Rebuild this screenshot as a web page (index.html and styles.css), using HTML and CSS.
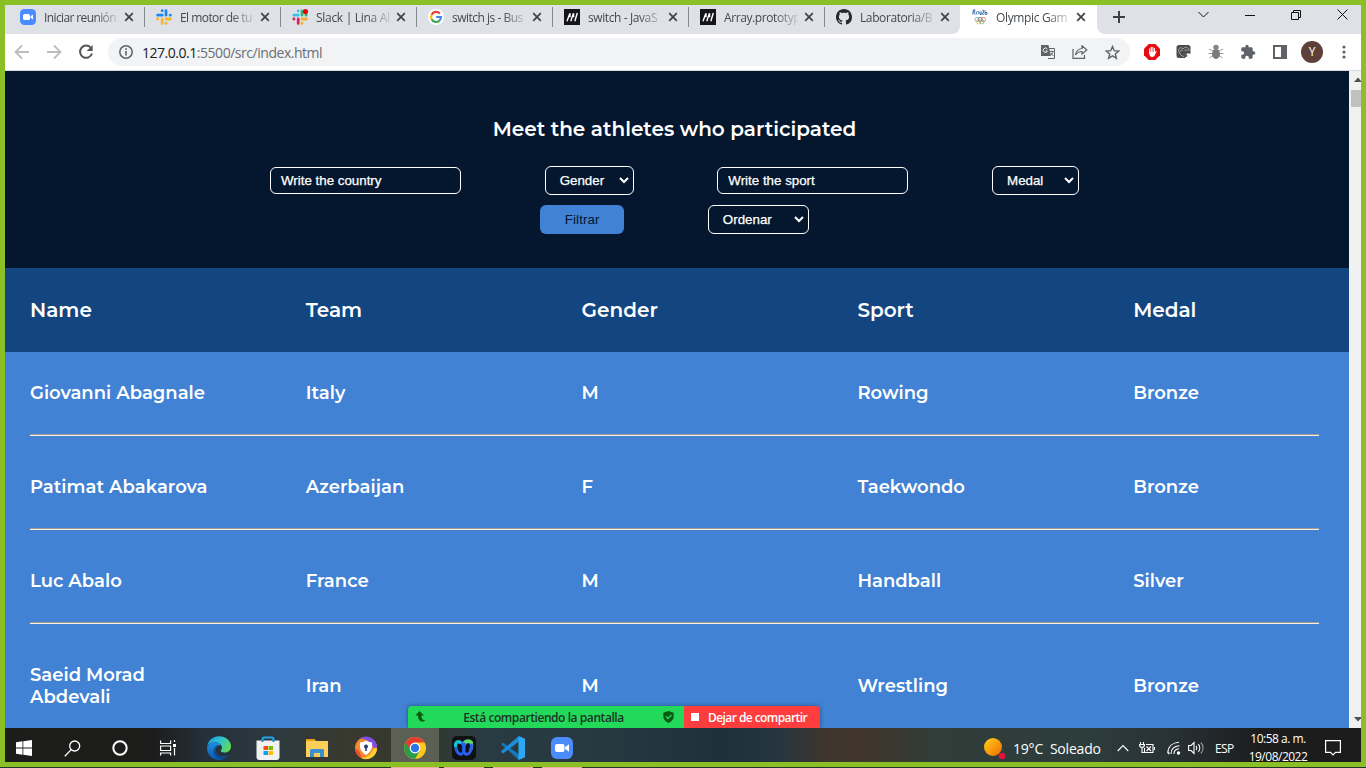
FILE: index.html
```html
<!DOCTYPE html>
<html lang="es">
<head>
<meta charset="utf-8">
<title>Olympic Games</title>
<link rel="stylesheet" href="styles.css">
</head>
<body>
<div class="screen">
  <div class="tabs">
    <div class="strip strip-left">
      <div class="tab"><svg class="fav" viewBox="0 0 16 16"><rect width="16" height="16" rx="4.500" fill="#4a8cff"/><rect x="3" y="5" width="7" height="6" rx="1.500" fill="#fff"/><path d="M10.500 7.300 13 5.500v5l-2.500-1.800z" fill="#fff"/></svg><span class="title t1">Iniciar reunión</span><svg class="x" viewBox="0 0 10 10"><path d="M1.200 1.200l7.600 7.600M8.800 1.200 1.200 8.800"/></svg></div>
      <div class="tab"><svg class="fav" viewBox="0 0 16 16" stroke-linecap="round" stroke-width="2.800" fill="none"><path d="M6.200 1.600v.2M1.600 6.200h4.600M10 1.600v4.600M14.200 6.200h.2" stroke="#1e88f0"/><path d="M1.600 10h.2M6.200 10v4.400M10 14.200v.2M10 10h4.400" stroke="#f5b731"/></svg><span class="title t2">El motor de tu</span><svg class="x" viewBox="0 0 10 10"><path d="M1.200 1.200l7.600 7.600M8.800 1.200 1.200 8.800"/></svg></div>
      <div class="tab"><svg class="fav" viewBox="0 0 16 16" stroke-linecap="round" stroke-width="2.800" fill="none"><path d="M6.200 1.800v.2M1.800 6.200h4.400" stroke="#36c5f0"/><path d="M10 2v4.200M14 6.200h.2" stroke="#2eb67d"/><path d="M1.800 10h.2M6.200 10v4.400" stroke="#e01e5a"/><path d="M10 14.200v.2M10 10h4.400" stroke="#ecb22e"/><circle cx="13.500" cy="2.600" r="2.600" fill="#f00000"/></svg><span class="title t3">Slack | Lina Al</span><svg class="x" viewBox="0 0 10 10"><path d="M1.200 1.200l7.600 7.600M8.800 1.200 1.200 8.800"/></svg></div>
      <div class="tab"><svg class="fav" viewBox="0 0 16 16"><circle cx="8" cy="8" r="8" fill="#fff"/><g fill="none" stroke-width="2.200"><path d="M11.900 4.600A5 5 0 0 0 3.600 5.700" stroke="#ea4335"/><path d="M3.600 5.700a5 5 0 0 0 0 4.600" stroke="#fbbc05"/><path d="M3.600 10.300a5 5 0 0 0 7.800 1.400" stroke="#34a853"/><path d="M11.400 11.700A5 5 0 0 0 13 8H8.200" stroke="#4285f4"/></g></svg><span class="title t4">switch js - Bus</span><svg class="x" viewBox="0 0 10 10"><path d="M1.200 1.200l7.600 7.600M8.800 1.200 1.200 8.800"/></svg></div>
      <div class="tab"><svg class="fav" viewBox="0 0 16 16"><path fill="#15141a" d="M0 0h16v16H0z"/><path d="M3 12.200 5.800 4.500M6.800 12.200 9.300 4.500M10.800 12.200 13.300 4M6 4.200v4M9.600 4.200v4" fill="none" stroke="#fff" stroke-width="1.400"/></svg><span class="title t5">switch - JavaS</span><svg class="x" viewBox="0 0 10 10"><path d="M1.200 1.200l7.600 7.600M8.800 1.200 1.200 8.800"/></svg></div>
      <div class="tab"><svg class="fav" viewBox="0 0 16 16"><path fill="#15141a" d="M0 0h16v16H0z"/><path d="M3 12.200 5.800 4.500M6.800 12.200 9.300 4.500M10.800 12.200 13.300 4M6 4.200v4M9.600 4.200v4" fill="none" stroke="#fff" stroke-width="1.400"/></svg><span class="title t6">Array.prototyp</span><svg class="x" viewBox="0 0 10 10"><path d="M1.200 1.200l7.600 7.600M8.800 1.200 1.200 8.800"/></svg></div>
      <div class="tab last"><svg class="fav" viewBox="0 0 16 16"><path fill="#24292f" d="M8 0C3.580 0 0 3.580 0 8c0 3.540 2.290 6.530 5.470 7.590.4.070.55-.17.55-.38 0-.19-.01-.82-.01-1.490-2.010.37-2.530-.49-2.690-.94-.09-.23-.48-.94-.82-1.130-.28-.15-.68-.52-.01-.53.63-.01 1.080.58 1.230.82.72 1.210 1.870.87 2.330.66.070-.52.28-.87.51-1.070-1.780-.2-3.640-.89-3.640-3.950 0-.87.31-1.590.82-2.150-.08-.2-.36-1.020.08-2.120 0 0 .67-.21 2.200.82.640-.18 1.320-.27 2-.27s1.360.09 2 .27c1.530-1.040 2.200-.82 2.200-.82.44 1.100.16 1.920.08 2.120.51.56.82 1.270.82 2.150 0 3.070-1.870 3.750-3.650 3.950.29.25.54.73.54 1.480 0 1.070-.01 1.930-.01 2.200 0 .21.15.46.55.38A8.010 8.010 0 0 0 16 8c0-4.420-3.580-8-8-8z"/></svg><span class="title t7">Laboratoria/B</span><svg class="x" viewBox="0 0 10 10"><path d="M1.200 1.200l7.600 7.600M8.800 1.200 1.200 8.800"/></svg></div>
    </div>
    <div class="tab active"><svg class="fav" viewBox="0 0 16 16" fill="none"><path d="M.8 5.500 1.300.8h1.500v1.700H1.500L3 5.500M4.300 2.500v3M5.500 2.500c2-.8 2 2.500.3 2.500M8 2.500v3h1.300v-3M10.300 1.300h1.300v1.700l-1.300 2.200h1.500M13 1.300v4h2V3.500h-1.800" stroke="#2c66a8" stroke-width=".9"/><g stroke-width=".7"><circle cx="5" cy="10.500" r="2.100" stroke="#5a9bd0"/><circle cx="8.200" cy="10.500" r="2.100" stroke="#555"/><circle cx="11.400" cy="10.500" r="2.100" stroke="#e0525a"/><circle cx="6.600" cy="12.800" r="2.100" stroke="#e8b84a"/><circle cx="9.800" cy="12.800" r="2.100" stroke="#56b078"/></g></svg><span class="title t8">Olympic Gam</span><svg class="x" viewBox="0 0 10 10"><path d="M1.200 1.200l7.600 7.600M8.800 1.200 1.200 8.800"/></svg></div>
    <div class="strip strip-right">
      <svg class="newtab" viewBox="0 0 12 12"><path d="M6 0v12M0 6h12" stroke="#3c4043" stroke-width="2"/></svg>
      <div class="winbtns">
        <svg width="11" height="8" viewBox="0 0 11 8"><path d="M.5 1l5 5 5-5"/></svg>
        <svg width="10" height="8" viewBox="0 0 10 8"><path d="M0 4.500h10"/></svg>
        <svg width="10" height="10" viewBox="0 0 10 10"><path d="M.5 2.500h7v7h-7zM2.500 2.500v-2h7v7h-2"/></svg>
        <svg width="11" height="11" viewBox="0 0 11 11"><path d="M.5.5l10 10M10.500.5l-10 10"/></svg>
      </div>
    </div>
  </div>

  <div class="toolbar">
    <div class="nav">
      <svg width="16" height="16" viewBox="0 0 16 16" stroke="#bcbdbf"><path d="M15 8H2M8 1.500 1.500 8 8 14.500"/></svg>
      <svg width="16" height="16" viewBox="0 0 16 16" stroke="#bcbdbf"><path d="M1 8h13M8 1.500 14.500 8 8 14.500"/></svg>
      <svg width="16" height="16" viewBox="0 0 16 16" stroke="#54575b"><path d="M13 4A6.100 6.100 0 1 0 14 9.500" stroke-width="2"/><path d="M14.700 1v6h-6z" fill="#54575b" stroke="none"/></svg>
    </div>
    <div class="omnibox">
      <svg width="14" height="14" viewBox="0 0 14 14"><circle cx="7" cy="7" r="6.200" fill="none" stroke="#5f6368" stroke-width="1.500"/><path d="M7 6v4.500M7 3.300v1.600" stroke="#5f6368" stroke-width="1.600"/></svg>
      <span class="url"><b>127.0.0.1</b>:5500/src/index.html</span>
      <div class="omni-icons">
        <svg width="14" height="14" viewBox="0 0 14 14"><path d="M5 3.500h8.500v10H7" fill="#f1f3f4" stroke="#5f6368"/><path d="M0 0h7.500L10 11H0z" fill="#5f6368"/><path d="M6.300 4A2.200 2.200 0 1 0 6.500 6H4.600" fill="none" stroke="#f1f3f4"/><path d="M9 6.500h3.500M11 5.500v1M12 6.500c-.5 2-1.500 3.200-2.500 4M10 8l2.500 3" fill="none" stroke="#5f6368" stroke-width=".9"/></svg>
        <svg width="16" height="14" viewBox="0 0 16 14" fill="none" stroke="#5f6368" stroke-width="1.200"><path d="M1 4v9.400h11.500V10"/><path d="M10 .8 14.800 5 10 9V6.500C7 6.500 5 7.500 3.500 10 4 6.500 6 4 10 3.500z"/></svg>
        <svg width="15" height="15" viewBox="0 0 15 15" fill="none" stroke="#5f6368" stroke-width="1.400"><path d="M7.500 1.500l1.700 4.200 4.600.3-3.500 2.900 1.100 4.400-3.900-2.400-3.900 2.400 1.100-4.400L1.200 6l4.600-.3z"/></svg>
      </div>
    </div>
    <div class="ext">
      <svg width="16" height="16" viewBox="0 0 16 16"><path d="M4.700 0h6.600L16 4.700v6.600L11.300 16H4.700L0 11.300V4.700z" fill="#e40d12"/><path d="M5.700 9V4.800M7.300 8V3.400M8.900 8V3.400M10.500 8.500V4.500" stroke="#fff" stroke-width="1.100" stroke-linecap="round"/><path d="M5.200 8h5.900l1-1.300.6.600-1.700 3.500C10.500 12.300 9.500 13 8.200 13c-2.200 0-3-2-3-5z" fill="#fff"/></svg>
      <svg width="16" height="16" viewBox="0 0 16 16"><rect x=".5" y="1" width="14" height="13" rx="2.500" fill="#4c4c4c"/><g fill="none" stroke="#a5a5a5"><path d="M3 8C1.500 4 5 2.500 7 5c2-3 6-2 6 2M5 8c-1-2 1-3 2-1M9 7c0-2 2-2 2 0M3 8c1 3 3 4 5 4.500"/></g><rect x="9" y="9.500" width="6.500" height="5" rx="2.300" fill="#fff"/><circle cx="9.800" cy="11.500" r="1.500" fill="#555"/></svg>
      <svg width="16" height="16" viewBox="0 0 16 16"><path d="M1 5l4 2M15 5l-4 2M.5 9.500H15.500M1.500 14 5 11.500M14.500 14 11 11.500" stroke="#9a9a9a"/><ellipse cx="8" cy="10" rx="4" ry="5" fill="#7b7b7b"/><circle cx="8" cy="3.500" r="2.700" fill="#858585"/></svg>
      <svg width="16" height="16" viewBox="0 0 24 24"><path fill="#5f6368" d="M20.500 11H19V7c0-1.100-.9-2-2-2h-4V3.500a2.500 2.500 0 0 0-5 0V5H4c-1.100 0-2 .9-2 2v3.800h1.500c1.500 0 2.700 1.200 2.700 2.700S5 16.200 3.500 16.200H2V20c0 1.100.9 2 2 2h3.800v-1.500c0-1.500 1.200-2.700 2.700-2.700s2.700 1.200 2.700 2.700V22H17c1.100 0 2-.9 2-2v-4h1.500a2.500 2.500 0 0 0 0-5z"/></svg>
      <svg width="16" height="16" viewBox="0 0 16 16"><path fill="#5f6368" d="M1 1h14v14H1zM3 3v10h6V3z" fill-rule="evenodd"/></svg>
      <span class="avatar">Y</span>
      <svg width="4" height="14" viewBox="0 0 4 14" fill="#5f6368"><circle cx="2" cy="2" r="1.600"/><circle cx="2" cy="7" r="1.600"/><circle cx="2" cy="12" r="1.600"/></svg>
    </div>
  </div>

  <div class="viewport">
    <div class="page">
      <section class="filters">
        <h3>Meet the athletes who participated</h3>
        <div class="controls">
          <div class="field">Write the country</div>
          <div class="select gender"><span>Gender</span><svg viewBox="0 0 10 7"><path d="M1 1l4 4 4-4"/></svg></div>
          <div class="field">Write the sport</div>
          <div class="select medal"><span>Medal</span><svg viewBox="0 0 10 7"><path d="M1 1l4 4 4-4"/></svg></div>
          <div class="button">Filtrar</div>
          <div class="select order"><span>Ordenar</span><svg viewBox="0 0 10 7"><path d="M1 1l4 4 4-4"/></svg></div>
        </div>
      </section>
      <div class="row head"><span>Name</span><span>Team</span><span>Gender</span><span>Sport</span><span>Medal</span></div>
      <div class="body">
        <div class="row"><span>Giovanni Abagnale</span><span>Italy</span><span>M</span><span>Rowing</span><span>Bronze</span></div>
        <hr>
        <div class="row"><span>Patimat Abakarova</span><span>Azerbaijan</span><span>F</span><span>Taekwondo</span><span>Bronze</span></div>
        <hr>
        <div class="row"><span>Luc Abalo</span><span>France</span><span>M</span><span>Handball</span><span>Silver</span></div>
        <hr>
        <div class="row"><span>Saeid Morad Abdevali</span><span>Iran</span><span>M</span><span>Wrestling</span><span>Bronze</span></div>
      </div>
    </div>
    <div class="scrollbar">
      <svg width="10" height="19" viewBox="0 0 10 19"><path d="M3 11h8L7 6.500z" fill="#505050"/></svg>
      <i class="thumb"></i>
      <svg class="down" width="10" height="17" viewBox="0 0 10 17"><path d="M3 6h8l-4 4.500z" fill="#505050"/></svg>
    </div>
    <div class="share">
      <div class="sharing">
        <svg width="12" height="12" viewBox="0 0 12 12"><path d="M4.500 0l4.500 4.500H6.500c0 3 .8 4.500 4 5C7.500 12 3 10.500 3 4.500H.3z" fill="#0b5a12"/></svg>
        <span>Está compartiendo la pantalla</span>
        <svg width="11" height="12" viewBox="0 0 11 12"><path d="M5.500 0 10.700 1.800V5c0 3.500-2 5.700-5.200 7C2.300 10.700.3 8.500.3 5V1.800z" fill="#0b5a12"/><path d="M3 5.500l2 2 3.500-3.500" fill="none" stroke="#23d959" stroke-width="1.400"/></svg>
      </div>
      <div class="stop"><i></i><span>Dejar de compartir</span></div>
    </div>
  </div>

  <div class="taskbar">
    <div class="apps">
      <div class="app start"><svg width="16" height="16" viewBox="0 0 16 16" fill="#fff"><path d="M0 2.300 6.500 1.300v6.200H0zM7.300 1.200 16 0v7.500H7.300zM0 8.400h6.500v6.300L0 13.800zM7.300 8.400H16V16l-8.700-1.200z"/></svg></div>
      <div class="app"><svg width="17" height="17" viewBox="0 0 17 17" fill="none" stroke="#fff" stroke-width="1.300"><circle cx="10.700" cy="6" r="5"/><path d="M7.200 9.600.8 16.200"/></svg></div>
      <div class="app"><svg width="16" height="16" viewBox="0 0 16 16"><circle cx="8" cy="8" r="6.700" fill="none" stroke="#fff" stroke-width="2"/></svg></div>
      <div class="app"><svg width="16" height="16" viewBox="0 0 16 16" fill="none" stroke="#fff" stroke-width="1.200"><path d="M.6.500v3h10v-3M.6 6h10v4.500H.6zM.6 15.500v-2.500h10v2.500M14.500 0v2M14.500 8v7.500"/><path d="M13 4h3v3h-3z" fill="#fff" stroke="none"/></svg></div>
      <div class="app wide edge"><svg width="24" height="24" viewBox="0 0 24 24"><defs><linearGradient id="eg" x1="0" y1=".2" x2="1" y2=".6"><stop offset="0" stop-color="#1f9be0"/><stop offset=".5" stop-color="#2fc2d0"/><stop offset="1" stop-color="#5fdc55"/></linearGradient><linearGradient id="eb" x1="0" y1="0" x2="0" y2="1"><stop offset="0" stop-color="#1b8fe0"/><stop offset="1" stop-color="#0c57a8"/></linearGradient></defs><path d="M.3 10C1 4.500 6 .2 12 .2c7 0 12 4.800 12 10 0 4-3 6.300-6.500 6.300-2.500 0-4-.9-3.700-2 .2-.7 1.200-1.300 1.200-3 0-2.500-3-5-7-5-4 0-7 1.500-7.700 3.500z" fill="url(#eg)"/><path d="M0 12C.3 8.500 4 6.300 8 6.300c3.200 0 5.500 1.500 6.500 3.200-2.600-1-6 .5-6 4.700 0 4.800 5.500 7.800 12 5.300C18.500 22.300 15.500 24 12 24 5 24 0 18.800 0 12z" fill="url(#eb)"/><path d="M8.500 14.200c0 4.800 5.500 7.800 12 5.300-1.500 2-3.500 3.400-6 4.200C8 22.500 5 17 7.500 12c.8-1.500 2-2.500 3.500-2.800-1.500 1-2.500 3-2.500 5z" fill="#0a4893"/></svg></div>
      <div class="app wide"><svg width="24" height="24" viewBox="0 0 24 24"><path d="M6.500 5.500V3.200c0-1 .6-1.700 1.700-1.700h7.600c1.100 0 1.700.7 1.700 1.700v2.300" fill="none" stroke="#22a5ea" stroke-width="2"/><path d="M.5 4.500h23V21a3 3 0 0 1-3 3h-17a3 3 0 0 1-3-3z" fill="#f1f1f1"/><path d="M6.500 3v3M17.500 3v3" stroke="#1889d0" stroke-width="2"/><path fill="#f04e1f" d="M7.500 10H12v4H7.500z"/><path fill="#7fba00" d="M12.500 10H17v4h-4.500z"/><path fill="#00a4ef" d="M7.500 15H12v4H7.500z"/><path fill="#ffb900" d="M12.500 15H17v4h-4.500z"/></svg></div>
      <div class="app wide"><svg width="22" height="20" viewBox="0 0 22 20"><path d="M0 1h8l2 2h12v16H0z" fill="#fccf57"/><path d="M0 1h8l2 2H0z" fill="#e5a012"/><path d="M4 12.500c0-1 .5-1.500 1.500-1.500h11c1 0 1.500.5 1.500 1.500V19h-4v-4H8v4H4z" fill="#3b8fd2"/></svg></div>
      <div class="app wide"><svg width="24" height="24" viewBox="0 0 24 24"><circle cx="12" cy="12" r="11" fill="#f28a2b"/><path d="M6 2.500A11 11 0 0 1 23 12c-2 .5-5-1-6-4-1-3-6-5-11-5.500z" fill="#7d4ee8"/><path d="M23 12a11 11 0 0 1-16 10c6 0 9-3 11-7 1-2 3-3 5-3z" fill="#ffcf2f"/><path d="M1 12a11 11 0 0 0 7 10.200L5 15z" fill="#f04b35"/><path d="M12 4.500c2 1.500 4.500 1.700 6 2 .8 6-1.500 10-6 12.500C7.500 16.500 5.200 12.500 6 6.500c1.500-.3 4-.5 6-2z" fill="#fff"/><circle cx="12" cy="10.500" r="2" fill="#263b70"/><path d="M11.200 11h1.600v4h-1.600z" fill="#263b70"/></svg></div>
      <div class="app wide current"><svg width="22" height="22" viewBox="0 0 22 22"><circle cx="11" cy="11" r="11" fill="#fcc91d"/><path d="M11 11 1.500 5.500A11 11 0 0 1 20.500 5.500H11z" fill="#e33b2e"/><path d="M1.500 5.500A11 11 0 0 0 11 22l4.800-8.300L11 11z" fill="#2a9d49"/><path d="M1.500 5.500 6 13l5-7.500z" fill="#e33b2e"/><path d="M1.500 5.500 6.300 13.700 5 14.500z" fill="#2a9d49"/><circle cx="11" cy="11" r="5.400" fill="#fff"/><circle cx="11" cy="11" r="4.200" fill="#2e72ea"/></svg></div>
      <div class="app wide"><svg width="24" height="24" viewBox="0 0 24 24"><rect width="24" height="24" rx="5" fill="#101112"/><g fill="none" stroke-width="3"><path d="M11.500 9.500C11.500 5 15 4.300 17.500 5c3 .8 2.800 6 1 9.500" stroke="#4fd46a"/><ellipse cx="15.500" cy="12" rx="3.800" ry="6.300" transform="rotate(12 15.500 12)" stroke="#2f5cf5"/><path d="M13 7c1-1.500 5.500-2.500 7 .5" stroke="#62db62"/><ellipse cx="8" cy="12" rx="4" ry="6.300" transform="rotate(-12 8 12)" stroke="#2360ee"/><path d="M3.500 11C2.500 5 7 4.500 9 7.500" stroke="#16c3d0"/></g></svg></div>
      <div class="app wide"><svg width="24" height="24" viewBox="0 0 24 24"><path d="M0 8.300 2 6.500l16 12V24L1 8.900z" fill="#1479bd"/><path d="M0 15.700 2 17.500l16-12V0L.5 14.800z" fill="#1c8dd6"/><path d="M17.500 0 24 2.800v18.400L17.500 24z" fill="#2ba9f3"/></svg></div>
      <div class="app wide"><svg width="22" height="22" viewBox="0 0 22 22"><rect width="22" height="22" rx="6" fill="#4a8cff"/><rect x="4" y="7" width="9.500" height="8" rx="2" fill="#fff"/><path d="M14 10.200 18 7.200v7.600l-4-3z" fill="#fff"/></svg></div>
    </div>
    <div class="tray">
      <svg class="sun" width="22" height="22" viewBox="0 0 22 22"><defs><linearGradient id="sn" x1="0" y1="0" x2="1" y2="1"><stop offset="0" stop-color="#ffd21c"/><stop offset="1" stop-color="#f06a00"/></linearGradient></defs><circle cx="9" cy="9" r="9" fill="url(#sn)"/><circle cx="18" cy="18" r="3.300" fill="#e0143c"/></svg>
      <span class="weather">19°C&nbsp; Soleado</span>
      <svg class="up" width="12" height="8" viewBox="0 0 12 8"><path d="M.7 7 6 1.500 11.300 7"/></svg>
      <svg class="bat" width="16" height="14" viewBox="0 0 16 14"><path d="M1.500 1v2M4.500 1v2M.5 3.500h5c0 2-.8 3-2.500 3s-2.500-1-2.500-3zM3 6.500v5h2M7 3.500h7v8H5.500V7M15.500 6v3M7.500 5.500l4.500 4.500M12 5.500 7.500 10"/></svg>
      <svg class="wifi" width="14" height="14" viewBox="0 0 14 14"><path d="M.8 12C1 5 6 1.500 12 1.200M4 13c0-5 3.500-8 8.500-8.300M7 13c0-3 2-5 5-5.200M1 13l1.500-1.500"/><circle cx="11.500" cy="12" r="1.700" fill="#fff" stroke="none"/></svg>
      <svg class="vol" width="16" height="14" viewBox="0 0 16 14"><path d="M.6 4.500h2.500L6 1.500v11L3.100 9.500H.6zM8 5c1 1 1 3 0 4M10.300 3.200c2 2 2 5.600 0 7.600"/><path d="M12.800 1.500c3 3 3 8 0 11" stroke="#999"/></svg>
      <span class="lang">ESP</span>
      <div class="clock"><span>10:58 a. m.</span><span>19/08/2022</span></div>
      <svg class="note" width="16" height="16" viewBox="0 0 16 16"><path d="M.6.6h14.800v11.800H10.500L8 15l-2.500-2.600H.6z"/></svg>
    </div>
  </div>
</div>
<div class="edge-line"><i class="u1"></i><i></i><i></i><i></i></div>
</body>
</html>
```
FILE: styles.css
```css
* { box-sizing: border-box; }
body { margin: 0; width: 1366px; height: 768px; overflow: hidden; font-family: "Open Sans", "Noto Sans", sans-serif; background: #24352c; }
svg { display: block; flex: none; }
.screen { width: 1366px; height: 767px; border: 5px solid #8bbf26; display: flex; flex-direction: column; overflow: hidden; }

.tabs { display: flex; height: 29px; background: #fff; }
.strip { display: flex; background: #dee1e6; }
.strip-left { width: 955px; border-bottom-right-radius: 8px; padding-left: 3px; }
.strip-right { flex: 1; border-bottom-left-radius: 8px; padding: 5px 13px 0 16px; justify-content: space-between; }
.tab { width: 136px; height: 24px; padding: 0 10px 0 12px; display: flex; align-items: center; position: relative; font-size: 12px; color: #45494d; }
.strip .tab::after { content: ""; position: absolute; right: -1px; top: 2px; width: 1px; height: 20px; background: #85888c; }
.strip .tab.last::after { display: none; }
.tab.active { width: 137px; }
.fav { width: 16px; height: 16px; }
.title { width: 74px; margin-left: 8px; white-space: nowrap; letter-spacing: -.4px; -webkit-mask-image: linear-gradient(90deg, #000 68%, rgba(0, 0, 0, .15)); mask-image: linear-gradient(90deg, #000 68%, rgba(0, 0, 0, .15)); }
.t1 { letter-spacing: -.62px; }
.t2 { letter-spacing: -.55px; }
.t3 { letter-spacing: -.3px; }
.t4 { letter-spacing: -.5px; }
.t8 { letter-spacing: -.35px; }
.x { width: 10px; height: 10px; margin-left: 6px; fill: none; stroke: #3f4246; stroke-width: 1.700; }
.newtab { width: 12px; height: 12px; margin-top: 1px; }
.winbtns { display: flex; gap: 36px; fill: none; stroke: #111; stroke-width: 1; align-items: center; height: 9px; }

.toolbar { display: flex; align-items: center; height: 37px; background: #fff; border-bottom: 1px solid #d7dadd; }
.nav { display: flex; gap: 16px; padding-left: 9px; width: 103px; fill: none; stroke-width: 1.800; }
.omnibox { width: 1022px; height: 28px; border-radius: 14px; background: #f1f3f4; display: flex; align-items: center; padding: 0 10px 0 11px; }
.url { margin-left: 9px; font-size: 14px; color: #6a6e73; letter-spacing: -.47px; white-space: nowrap; }
.url b { font-weight: 400; color: #202124; }
.omni-icons { margin-left: auto; display: flex; gap: 17px; align-items: center; }
.ext { display: flex; align-items: center; gap: 16px; margin-left: 14px; }
.ext .avatar { width: 22px; height: 22px; border-radius: 50%; background: #5d4037; color: #fff; font-size: 12px; line-height: 22px; text-align: center; margin-left: -3px; }
.ext .avatar + svg { margin-left: 3px; }

.viewport { flex: 1; min-height: 0; display: flex; position: relative; overflow: hidden; }
.page { width: 1344px; font-family: Montserrat, Inter, "Open Sans", sans-serif; font-weight: 600; color: #fff; background: #4182d4; }
.filters { height: 197px; background: #04172f; padding: 46px 5px 0 0; }
.filters h3 { margin: 0; font-size: 20px; line-height: 24px; font-weight: 600; text-align: center; }
.controls { display: flex; flex-wrap: wrap; justify-content: center; align-items: center; gap: 10px 83.700px; margin-top: 25px; font: 13.333px "Liberation Sans", Arial, sans-serif; padding: 0 200px; }
.field { width: 191px; height: 27px; border: 1px solid #fff; border-radius: 6px; padding: 0 10px; line-height: 25px; font-weight: 400; -webkit-text-stroke: .25px #fff; }
.select { height: 29px; border: 1px solid #fff; border-radius: 6px; padding: 0 4px 0 14px; display: flex; align-items: center; justify-content: space-between; -webkit-text-stroke: .25px #fff; }
.select svg { width: 10px; height: 7px; fill: none; stroke: #fff; stroke-width: 2; }
.gender { width: 89px; }
.medal { width: 87px; }
.order { width: 101px; }
.button { width: 84px; height: 29px; border-radius: 6px; background: #4182d4; color: #03162f; line-height: 29px; text-align: center; letter-spacing: .1px; }
.row { display: grid; grid-template-columns: repeat(5, 1fr); column-gap: 90px; align-items: center; padding: 30px 0; font-size: 18px; line-height: 22px; }
.head { height: 84px; background: #134680; padding: 0 30px 0 25px; font-size: 20px; }
.body { padding: 0 30px 0 25px; }
.body hr { margin: 0 0 10px; border: 0; height: 2px; border-top: 1px solid #a29a91; background: #f6f0e8; }

.scrollbar { width: 12px; background: #f1f1f1; padding-left: 2px; display: flex; flex-direction: column; }
.thumb { height: 17px; background: #c1c1c1; }
.down { margin-top: auto; }

.share { position: absolute; left: 403px; top: 635px; width: 412px; height: 22px; display: flex; border-radius: 4px 4px 0 0; overflow: hidden; font-size: 12px; font-weight: 600; box-shadow: 0 0 4px rgba(0, 0, 0, .4); }
.sharing { width: 276px; background: #23d959; color: #1c3328; display: flex; align-items: center; justify-content: space-between; padding: 0 10px 0 7px; }
.sharing span { letter-spacing: -.43px; padding-right: 3px; }
.stop { flex: 1; background: #fd3d3e; color: #fff; display: flex; align-items: center; padding-left: 7px; gap: 9px; letter-spacing: -.57px; white-space: nowrap; }
.stop i { width: 8px; height: 8px; background: #fff; }

.taskbar { height: 34px; overflow: hidden; display: flex; justify-content: space-between; color: #fff; background: linear-gradient(90deg, #1c1c1b 0, #1d1d1c 150px, #243039 200px, #2c3a40 270px, #38392e 345px, #34382f 420px, #293a43 480px, #273841 600px, #1f303b 720px, #243540 770px, #3e352e 820px, #40362c 860px, #303d39 930px, #2d3d3c 1080px, #283237 1160px, #1c1c1c 1260px); }
.apps { display: flex; height: 40px; }
.app { width: 48px; height: 40px; display: flex; align-items: center; justify-content: center; }
.app.start { width: 43px; padding-right: 5px; }
.app.wide { width: 49px; }
.app.edge { margin-left: 2px; }
.app.current { width: 48px; margin-left: 1px; padding-right: 1px; background: #5b5f54; }
.tray { display: flex; height: 40px; align-items: center; fill: none; stroke: #fff; stroke-width: 1.100; padding-right: 20px; white-space: nowrap; }
.tray span { stroke: none; }
.tray .sun { stroke: none; margin-top: 1px; }
.weather { font-size: 14px; margin-left: 7px; width: 88px; letter-spacing: -.2px; padding-top: 1px; }
.up { margin-left: 16px; }
.bat { margin-left: 10px; }
.wifi { margin-left: 12px; }
.vol { margin-left: 7px; }
.lang { font-size: 12px; margin-left: 11px; width: 19px; letter-spacing: -.6px; }
.clock { display: flex; flex-direction: column; align-items: center; font-size: 12px; line-height: 18px; width: 60px; margin-left: 14px; letter-spacing: -.5px; }
.note { margin-left: 17px; stroke-width: 1.200; }

.edge-line { height: 1px; display: flex; gap: 9px; padding-left: 391px; }
.edge-line i { width: 40px; background: #e9ac9c; }
.edge-line .u1 { width: 48px; margin-right: -4px; }
```
